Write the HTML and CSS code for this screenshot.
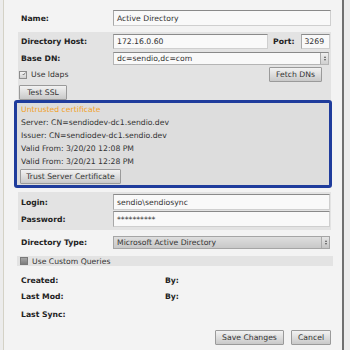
FILE: index.html
```html
<!DOCTYPE html>
<html>
<head>
<meta charset="utf-8">
<link rel="stylesheet" href="styles.css">
</head>
<body>
<div class="page">
  <div class="content">
    <div class="row row-name">
      <span class="label">Name:</span>
      <div class="input grow">Active Directory</div>
    </div>

    <div class="panel panel-dir">
      <div class="row row-host">
        <span class="label">Directory Host:</span>
        <div class="input host">172.16.0.60</div>
        <span class="label port-label">Port:</span>
        <div class="input port">3269</div>
      </div>
      <div class="row row-dn">
        <span class="label">Base DN:</span>
        <div class="select dn"><span class="select-text">dc=sendio,dc=com</span><span class="spin"><i class="up"></i><i class="down"></i></span></div>
      </div>
      <div class="row row-ldaps">
        <span class="check checked"><svg width="8" height="8" viewBox="0 0 8 8"><path d="M1.5 4 L3.2 6 L7 1" fill="none" stroke="#4a4a4a" stroke-width="1.3"/></svg></span>
        <span class="check-label">Use ldaps</span>
        <span class="btn fetch">Fetch DNs</span>
      </div>
      <div class="row row-ssl">
        <span class="btn ssl">Test SSL</span>
      </div>
    </div>

    <div class="cert">
      <div class="cert-title">Untrusted certificate</div>
      <div class="cert-line">Server: CN=sendiodev-dc1.sendio.dev</div>
      <div class="cert-line">Issuer: CN=sendiodev-dc1.sendio.dev</div>
      <div class="cert-line">Valid From: 3/20/20 12:08 PM</div>
      <div class="cert-line">Valid From: 3/20/21 12:28 PM</div>
      <span class="btn trust">Trust Server Certificate</span>
    </div>

    <div class="panel panel-login">
      <div class="row row-login">
        <span class="label">Login:</span>
        <div class="input grow">sendio\sendiosync</div>
      </div>
      <div class="row row-pass">
        <span class="label">Password:</span>
        <div class="input grow pass">**********</div>
      </div>
    </div>

    <div class="row row-type">
      <span class="label">Directory Type:</span>
      <div class="select type"><span class="select-text">Microsoft Active Directory</span><span class="spin"><i class="up"></i><i class="down"></i></span></div>
    </div>

    <div class="custom-bar">
      <span class="check unchecked"></span>
      <span class="check-label">Use Custom Queries</span>
    </div>

    <div class="meta">
      <div class="meta-row"><span class="label">Created:</span><span class="label by">By:</span></div>
      <div class="meta-row"><span class="label">Last Mod:</span><span class="label by">By:</span></div>
      <div class="meta-row sync"><span class="label">Last Sync:</span></div>
    </div>

    <div class="actions">
      <span class="btn save">Save Changes</span>
      <span class="btn cancel">Cancel</span>
    </div>
  </div>
</div>
</body>
</html>
```

FILE: styles.css
```css
html, body {
  margin: 0;
  padding: 0;
}
body {
  width: 350px;
  height: 350px;
  overflow: hidden;
  background: #ececec;
  font-family: "DejaVu Sans", Verdana, sans-serif;
  font-size: 7.7px;
  color: #333;
}
.page {
  margin-left: 3px;
  width: 338px;
  height: 350px;
  background: #f3f3f3;
  border-left: 1px solid #d4d2c6;
  border-right: 2px solid #707070;
}
.content {
  padding: 10px 0 0 14px;
  width: 313px;
}
.row {
  display: flex;
  align-items: center;
}
.label {
  font-weight: bold;
  color: #222;
  width: 92px;
  padding-left: 3px;
  flex: none;
}
.input {
  box-sizing: border-box;
  background: #f9f9f9;
  border: 1px solid #cfcfcf;
  border-top-color: #8a8a8a;
  border-left-color: #a8a8a8;
  padding-left: 3px;
  color: #333;
  display: flex;
  align-items: center;
}
.grow {
  flex: 1;
}
.row-name {
  height: 16px;
}
.row-name .input {
  height: 16px;
}
.panel {
  background: #e3e3e3;
}
.panel-dir {
  margin-top: 6px;
  padding-top: 2px;
  height: 66px;
}
.row-host {
  height: 15px;
}
.input.host {
  width: 155px;
  height: 15px;
}
.port-label {
  width: auto;
  padding-left: 5px;
  margin-right: 7px;
}
.input.port {
  width: 29px;
  height: 15px;
  padding-left: 2px;
}
.row-dn {
  margin-top: 3px;
  height: 13px;
}
.select {
  box-sizing: border-box;
  height: 13px;
  display: flex;
  align-items: center;
  border: 1px solid #b5b5b5;
  border-top-color: #8a8a8a;
  background: #f9f9f9;
  position: relative;
}
.select-text {
  flex: 1;
  padding-left: 3px;
}
.select.dn {
  width: 216px;
}
.spin {
  width: 8px;
  height: 11px;
  box-sizing: border-box;
  border-left: 1px solid #aaa;
  background: linear-gradient(#f0f0f0, #cfcfcf);
  display: flex;
  flex-direction: column;
  align-items: center;
  justify-content: center;
  gap: 1px;
}
.spin i {
  display: block;
  width: 0;
  height: 0;
  border-left: 1.5px solid transparent;
  border-right: 1.5px solid transparent;
}
.spin .up {
  border-bottom: 2px solid #555;
}
.spin .down {
  border-top: 2px solid #555;
}
.row-ldaps {
  margin-top: 2px;
  height: 15px;
  padding-left: 1px;
}
.check {
  box-sizing: border-box;
  width: 8px;
  height: 8px;
  flex: none;
  display: flex;
  align-items: center;
  justify-content: center;
}
.check.checked {
  border: 1px solid #8c8c8c;
  background: linear-gradient(#f4f4f4, #cfcfcf);
}
.check.checked svg {
  margin-left: 2px;
  margin-top: -2px;
}
.check.unchecked {
  border: 1px solid #7a7a7a;
  background: linear-gradient(#a6a6a6, #7d7d7d);
}
.check-label {
  margin-left: 4px;
  color: #333;
}
.btn {
  box-sizing: border-box;
  display: flex;
  align-items: center;
  justify-content: center;
  height: 15px;
  border: 1px solid #9a9a9a;
  border-radius: 1px;
  background: linear-gradient(#f2f2f2, #c9c9c9);
  color: #333;
  flex: none;
  white-space: nowrap;
}
.fetch {
  width: 53px;
  margin-left: auto;
  margin-right: 9px;
}
.row-ssl {
  margin-top: 3px;
  height: 15px;
  padding-left: 1px;
}
.ssl {
  width: 48px;
}
.cert {
  margin-left: -4px;
  width: 318px;
  height: 88px;
  box-sizing: border-box;
  border: 3px solid #1f3c9c;
  border-radius: 3px;
  background: #dddddd;
  padding-left: 4px;
}
.cert-title,
.cert-line {
  height: 13px;
  line-height: 13px;
  white-space: nowrap;
}
.cert-title {
  color: #f2a22a;
}
.trust {
  margin-top: 1px;
  margin-left: -1px;
  width: 101px;
}
.panel-login {
  margin-top: 4px;
  padding: 2px 0 3px;
}
.row-login,
.row-pass {
  height: 16px;
}
.row-login .input,
.row-pass .input {
  height: 16px;
  margin-right: 1px;
}
.row-pass {
  margin-top: 1px;
}
.input.pass {
  align-items: flex-start;
  padding-top: 3px;
}
.row-type {
  margin-top: 6px;
  height: 13px;
}
.select.type {
  width: 217px;
  background: linear-gradient(#dedede, #c8c8c8);
  border-color: #a5a5a5;
}
.select.type .spin {
  background: linear-gradient(#e6e6e6, #c4c4c4);
}
.custom-bar {
  margin-top: 7px;
  margin-left: -1px;
  width: 313px;
  height: 10px;
  background: #e3e3e3;
  display: flex;
  align-items: center;
  padding-left: 3px;
}
.meta {
  margin-top: 6px;
}
.meta-row {
  display: flex;
  align-items: center;
  height: 16px;
}
.meta-row .label {
  width: 144px;
}
.meta-row .by {
  width: auto;
  padding-left: 0;
}
.meta-row.sync {
  margin-top: 2px;
}
.actions {
  margin-top: 8px;
  display: flex;
  justify-content: flex-end;
  gap: 7px;
}
.save {
  width: 69px;
}
.cancel {
  width: 40px;
}
```
